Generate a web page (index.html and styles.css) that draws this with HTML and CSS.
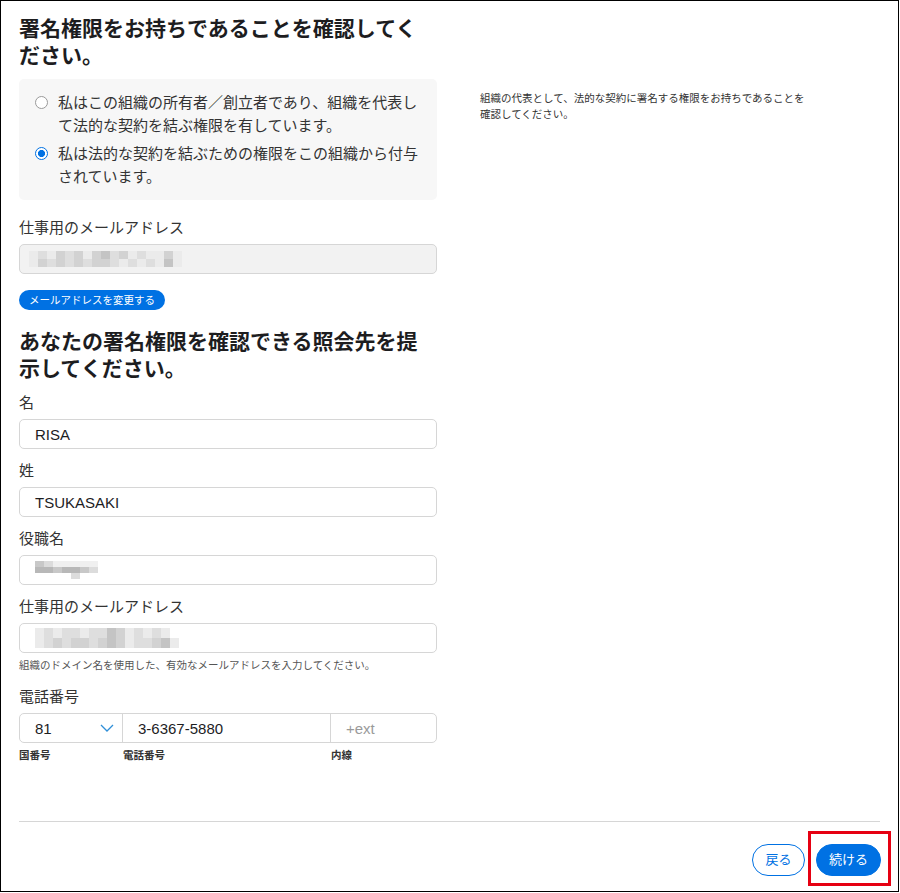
FILE: index.html
```html
<!DOCTYPE html>
<html lang="ja">
<head>
<meta charset="utf-8">
<title>署名権限の確認</title>
<link rel="stylesheet" href="styles.css">
</head>
<body>
<div class="frame">
  <div class="main">
    <div class="left">
      <h2 class="heading first">署名権限をお持ちであることを確認してください。</h2>
      <div class="radio-box">
        <div class="option">
          <span class="radio"></span>
          <span class="option-text">私はこの組織の所有者／創立者であり、組織を代表して法的な契約を結ぶ権限を有しています。</span>
        </div>
        <div class="option">
          <span class="radio checked"></span>
          <span class="option-text">私は法的な契約を結ぶための権限をこの組織から付与されています。</span>
        </div>
      </div>
      <div class="label spaced">仕事用のメールアドレス</div>
      <div class="input disabled">
        <span class="mosaic m-email1">
          <span class="row"><i class="a"></i><i class="b"></i><i class="a"></i><i class="c"></i><i class="b"></i><i class="c"></i><i class="a"></i><i class="c"></i><i class="d"></i><i class="b"></i><i class="c"></i><i class="a"></i><i class="b"></i><i class="a"></i><i class="a"></i><i class="c"></i><i class="a"></i></span>
          <span class="row"><i class="a"></i><i class="c"></i><i class="b"></i><i class="c"></i><i class="b"></i><i class="c"></i><i class="b"></i><i class="c"></i><i class="c"></i><i class="b"></i><i class="a"></i><i class="b"></i><i class="a"></i><i class="b"></i><i class="a"></i><i class="d"></i><i class="a"></i></span>
        </span>
      </div>
      <button class="pill">メールアドレスを変更する</button>

      <h2 class="heading second">あなたの署名権限を確認できる照会先を提示してください。</h2>

      <div class="label">名</div>
      <div class="input"><span class="value">RISA</span></div>

      <div class="label gap">姓</div>
      <div class="input"><span class="value">TSUKASAKI</span></div>

      <div class="label gap">役職名</div>
      <div class="input">
        <span class="mosaic m-title">
          <span class="row"><i class="c"></i><i class="b"></i><i class="a"></i><i class="a"></i><i class="a"></i><i class="a"></i><i class="a"></i></span>
          <span class="row"><i class="d"></i><i class="d"></i><i class="c"></i><i class="d"></i><i class="d"></i><i class="c"></i><i class="b"></i></span>
          <span class="row"><i class="e"></i><i class="e"></i><i class="e"></i><i class="e"></i><i class="b"></i><i class="e"></i><i class="e"></i></span>
        </span>
      </div>

      <div class="label gap">仕事用のメールアドレス</div>
      <div class="input">
        <span class="mosaic m-email2">
          <span class="row"><i class="a"></i><i class="b"></i><i class="a"></i><i class="b"></i><i class="b"></i><i class="a"></i><i class="b"></i><i class="b"></i><i class="d"></i><i class="c"></i><i class="a"></i><i class="b"></i><i class="a"></i><i class="b"></i><i class="a"></i><i class="e"></i></span>
          <span class="row"><i class="a"></i><i class="b"></i><i class="c"></i><i class="b"></i><i class="c"></i><i class="c"></i><i class="b"></i><i class="c"></i><i class="d"></i><i class="c"></i><i class="a"></i><i class="b"></i><i class="b"></i><i class="c"></i><i class="d"></i><i class="a"></i></span>
        </span>
      </div>
      <div class="hint">組織のドメイン名を使用した、有効なメールアドレスを入力してください。</div>

      <div class="label phone-label">電話番号</div>
      <div class="phone-row">
        <div class="cell country">
          <span class="value">81</span>
          <svg class="chevron" width="14" height="8" viewBox="0 0 14 8"><path d="M1 1l6 6 6-6" fill="none" stroke="#2f8fd8" stroke-width="1.3"/></svg>
        </div>
        <div class="cell number"><span class="value">3-6367-5880</span></div>
        <div class="cell ext"><span class="placeholder">+ext</span></div>
      </div>
      <div class="sublabels">
        <span class="sl-country">国番号</span>
        <span class="sl-number">電話番号</span>
        <span class="sl-ext">内線</span>
      </div>
    </div>
    <div class="right">
      <p class="side-note">組織の代表として、法的な契約に署名する権限をお持ちであることを確認してください。</p>
    </div>
  </div>
  <div class="footer">
    <button class="btn secondary">戻る</button>
    <div class="btn-wrap">
      <button class="btn primary">続ける</button>
      <span class="highlight"></span>
    </div>
  </div>
</div>
</body>
</html>
```

FILE: styles.css
```css
* { box-sizing: border-box; }

html, body {
  margin: 0;
  padding: 0;
  background: #ffffff;
}

body {
  font-family: "Liberation Sans", "Noto Sans CJK JP", sans-serif;
  color: #333333;
}

.frame {
  width: 899px;
  height: 892px;
  border: 1px solid #000000;
  display: flex;
  flex-direction: column;
  position: relative;
}

.main {
  flex: 1;
  display: flex;
  padding: 14px 18px 0 18px;
}

.left {
  width: 418px;
  display: flex;
  flex-direction: column;
  align-items: flex-start;
}

.right {
  margin-left: 43px;
  padding-top: 75px;
}

.side-note {
  margin: 0;
  width: 330px;
  font-size: 10.5px;
  line-height: 16px;
  color: #333333;
}

.heading {
  margin: 0;
  width: 418px;
  font-size: 21px;
  line-height: 27px;
  font-weight: 700;
  color: #1d1d1f;
}

.heading.second {
  margin-top: 18px;
  margin-bottom: 10px;
}

.radio-box {
  margin-top: 10px;
  width: 418px;
  background: #f7f7f7;
  border-radius: 5px;
  padding: 12px 16px 12px 16px;
  display: flex;
  flex-direction: column;
  gap: 5px;
}

.option {
  display: flex;
  align-items: flex-start;
  gap: 10px;
}

.radio {
  flex: none;
  width: 13px;
  height: 13px;
  margin-top: 5px;
  border-radius: 50%;
  border: 1px solid #9a9a9a;
  background: #ffffff;
}

.radio.checked {
  border: 1.5px solid #0071e3;
  background: radial-gradient(circle, #0071e3 0 3.3px, #ffffff 3.8px);
}

.option-text {
  font-size: 15px;
  line-height: 23px;
  color: #333333;
  width: 360px;
}

.label {
  font-size: 15px;
  line-height: 22px;
  color: #333333;
  margin-bottom: 5px;
}

.label.spaced { margin-top: 17px; }
.label.gap { margin-top: 11px; }

.input {
  width: 418px;
  height: 30px;
  border: 1px solid #d6d6d6;
  border-radius: 5px;
  background: #ffffff;
  display: flex;
  align-items: center;
  padding-left: 15px;
}

.input.disabled {
  background: #f2f2f2;
  padding-left: 9px;
}

.value {
  font-size: 15px;
  color: #1d1d1f;
}

.placeholder {
  font-size: 15px;
  color: #9a9a9a;
}

.pill {
  margin-top: 16px;
  height: 20px;
  padding: 0 10px;
  border: none;
  border-radius: 10px;
  background: #0071e3;
  color: #ffffff;
  font-family: "Liberation Sans", "Noto Sans CJK JP", sans-serif;
  font-size: 10.5px;
  line-height: 20px;
}

.hint {
  margin-top: 4px;
  font-size: 10.5px;
  line-height: 16px;
  color: #555555;
}

.label.phone-label { margin-top: 13px; }

.phone-row {
  width: 418px;
  height: 30px;
  display: flex;
  border: 1px solid #d6d6d6;
  border-radius: 5px;
}

.cell {
  display: flex;
  align-items: center;
  height: 100%;
}

.cell.country {
  width: 103px;
  padding-left: 15px;
  padding-right: 8px;
  justify-content: space-between;
  border-right: 1px solid #d6d6d6;
}

.cell.number {
  width: 208px;
  padding-left: 15px;
  border-right: 1px solid #d6d6d6;
}

.cell.ext {
  flex: 1;
  padding-left: 15px;
}

.chevron { display: block; }

.sublabels {
  margin-top: 4px;
  display: flex;
  font-size: 10.5px;
  line-height: 16px;
  font-weight: 700;
  color: #333333;
}

.sl-country { width: 104px; }
.sl-number { width: 208px; }

.mosaic {
  display: flex;
  flex-direction: column;
}

.mosaic .row {
  display: flex;
}

.mosaic i {
  display: block;
}

.m-email1 i { width: 9px; height: 8px; }
.m-email2 i { width: 9px; height: 10px; }
.m-title i { width: 9px; height: 6px; }

.mosaic i.a { background: #ebebeb; }
.mosaic i.b { background: #dedede; }
.mosaic i.c { background: #d2d2d2; }
.mosaic i.d { background: #c4c4c4; }
.mosaic i.e { background: transparent; }

.m-title i.a { background: #f0f0f0; }
.m-title i.b { background: #dcdcdc; }
.m-title i.c { background: #c8c8c8; }
.m-title i.d { background: #b8b8b8; }

.footer {
  height: 70px;
  margin: 0 18px;
  border-top: 1px solid #d6d6d6;
  padding-top: 22px;
  display: flex;
  justify-content: flex-end;
  align-items: flex-start;
  gap: 11px;
}

.btn {
  display: block;
  height: 32px;
  padding: 0;
  text-align: center;
  border-radius: 16px;
  font-family: "Liberation Sans", "Noto Sans CJK JP", sans-serif;
  font-size: 13px;
  line-height: 30px;
}

.btn.secondary {
  width: 53px;
  background: #ffffff;
  border: 1px solid #0071e3;
  color: #0071e3;
}

.btn.primary {
  width: 65px;
  background: #0071e3;
  border: 1px solid #0071e3;
  color: #ffffff;
}

.btn-wrap {
  position: relative;
  margin-right: -1px;
}

.highlight {
  position: absolute;
  left: -8px;
  top: -13px;
  right: -10px;
  bottom: -10px;
  border: 3px solid #e60012;
  pointer-events: none;
}
```
